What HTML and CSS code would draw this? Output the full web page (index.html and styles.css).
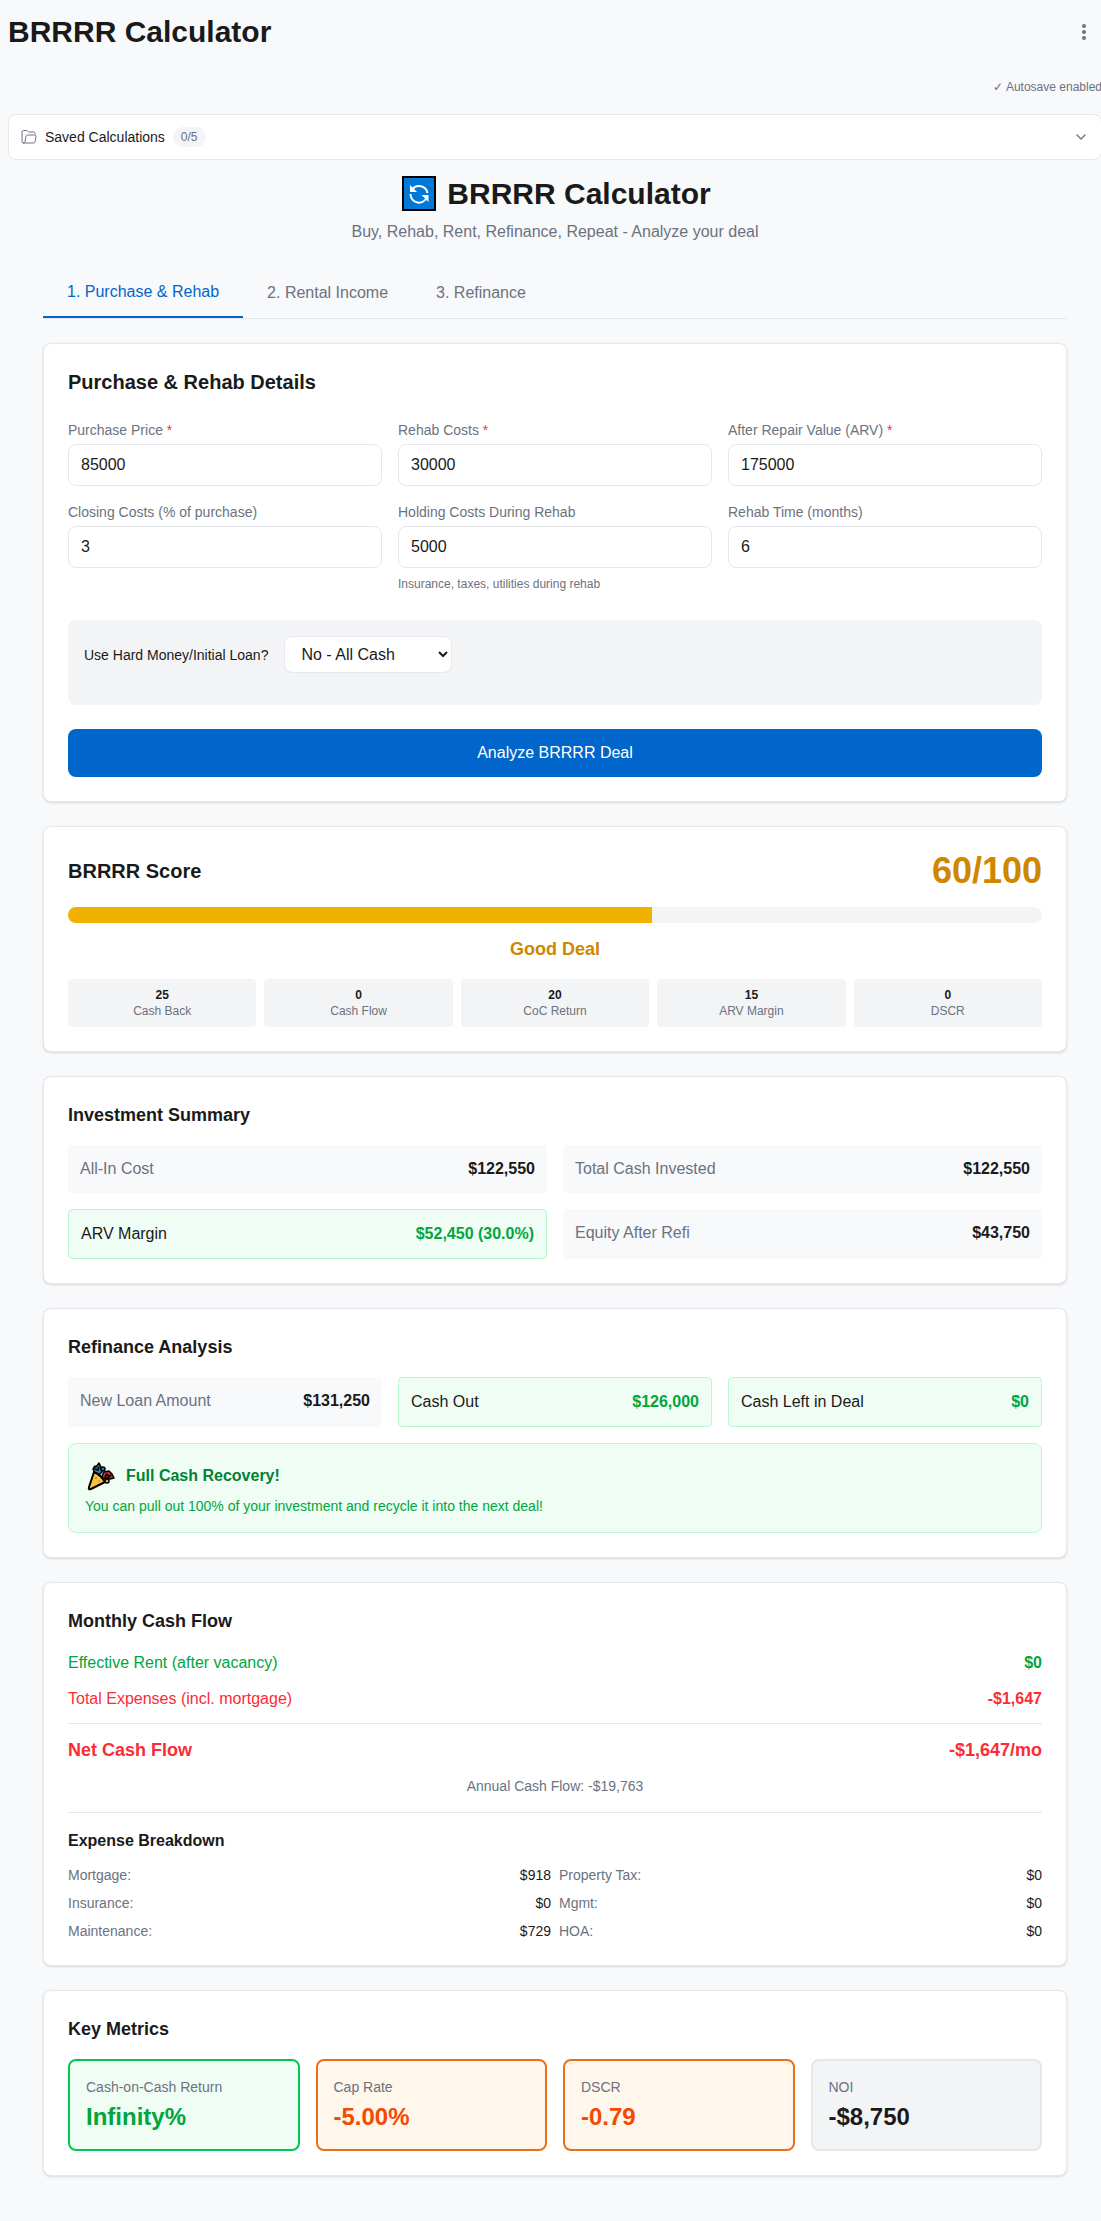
FILE: index.html
```html
<!DOCTYPE html>
<html lang="en">
<head>
  <meta charset="UTF-8">
  <meta name="viewport" content="width=device-width, initial-scale=1.0">
  <title>BRRRR Calculator</title>
  <link rel="stylesheet" href="styles.css">
</head>
<body>
  <div class="page">
    <header class="page-header">
      <h1>BRRRR Calculator</h1>
      <button class="menu-button" type="button" aria-label="More options">
        <svg width="20" height="20" viewBox="0 0 20 20" fill="currentColor">
          <circle cx="10" cy="4" r="2"/>
          <circle cx="10" cy="10" r="2"/>
          <circle cx="10" cy="16" r="2"/>
        </svg>
      </button>
    </header>

    <p class="autosave">✓ Autosave enabled</p>

    <!-- Saved calculations -->
    <button class="saved-toggle" type="button" aria-expanded="false">
      <svg width="16" height="16" viewBox="0 0 16 16" fill="none" stroke="currentColor" stroke-linecap="round" stroke-linejoin="round">
        <path d="M14 5V4.500a1.500 1.500 0 0 0-1.500-1.500H7.500L6 1.500H2.500A1.500 1.500 0 0 0 1 3v9.500A1.500 1.500 0 0 0 2.500 14"/>
        <path d="M2.500 14h10a1.500 1.500 0 0 0 1.500-1.200L15 7.500A1.500 1.500 0 0 0 13.500 6H6.500A1.500 1.500 0 0 0 5 7.200L4 12.500A1.500 1.500 0 0 1 2.500 14z"/>
      </svg>
      <span class="saved-title">Saved Calculations</span>
      <span class="badge">0/5</span>
      <svg class="chevron" width="16" height="16" viewBox="0 0 24 24" fill="none" stroke="currentColor" stroke-width="2" stroke-linecap="round" stroke-linejoin="round">
        <path d="M6 9l6 6 6-6"/>
      </svg>
    </button>

    <main class="calculator">
      <div class="intro">
        <h2 class="intro-title">
          <svg width="40" height="36" viewBox="0 0 40 36" aria-hidden="true">
            <rect x="4" y="1" width="32" height="33" fill="#0078d7" stroke="#000" stroke-width="2"/>
            <g fill="none" stroke="#fff" stroke-width="2">
              <path d="M13 14a8.500 8.500 0 0 1 15.500 3"/>
              <path d="M28 21a8.500 8.500 0 0 1-16.500-3"/>
            </g>
            <path d="M11 9v7h7z" fill="#fff"/>
            <path d="M29.500 26v-7h-7z" fill="#fff"/>
          </svg>
          BRRRR Calculator
        </h2>
        <p>Buy, Rehab, Rent, Refinance, Repeat - Analyze your deal</p>
      </div>

      <nav class="tabs">
        <button class="tab active" type="button">1. Purchase &amp; Rehab</button>
        <button class="tab" type="button">2. Rental Income</button>
        <button class="tab" type="button">3. Refinance</button>
      </nav>

      <!-- Purchase form -->
      <form class="card">
        <h3 class="form-title">Purchase &amp; Rehab Details</h3>
        <div class="grid three">
          <div class="field">
            <label for="purchase-price">Purchase Price <span class="required">*</span></label>
            <input type="text" inputmode="numeric" id="purchase-price" value="85000">
          </div>
          <div class="field">
            <label for="rehab-costs">Rehab Costs <span class="required">*</span></label>
            <input type="text" inputmode="numeric" id="rehab-costs" value="30000">
          </div>
          <div class="field">
            <label for="arv">After Repair Value (ARV) <span class="required">*</span></label>
            <input type="text" inputmode="numeric" id="arv" value="175000">
          </div>
          <div class="field">
            <label for="closing-costs">Closing Costs (% of purchase)</label>
            <input type="text" inputmode="numeric" id="closing-costs" value="3">
          </div>
          <div class="field">
            <label for="holding-costs">Holding Costs During Rehab</label>
            <input type="text" inputmode="numeric" id="holding-costs" value="5000">
            <small>Insurance, taxes, utilities during rehab</small>
          </div>
          <div class="field">
            <label for="rehab-time">Rehab Time (months)</label>
            <input type="text" inputmode="numeric" id="rehab-time" value="6">
          </div>
        </div>

        <div class="loan-box">
          <label for="initial-loan">Use Hard Money/Initial Loan?</label>
          <select id="initial-loan">
            <option>No - All Cash</option>
            <option>Yes - Use Loan</option>
          </select>
        </div>

        <button class="analyze-button" type="button">Analyze BRRRR Deal</button>
      </form>

      <!-- Score -->
      <section class="card">
        <div class="score-header">
          <h3>BRRRR Score</h3>
          <span class="score">60/100</span>
        </div>
        <div class="score-bar">
          <div class="score-fill" style="width: 60%"></div>
        </div>
        <p class="score-label">Good Deal</p>
        <div class="score-parts">
          <div class="score-part"><strong>25</strong><span>Cash Back</span></div>
          <div class="score-part"><strong>0</strong><span>Cash Flow</span></div>
          <div class="score-part"><strong>20</strong><span>CoC Return</span></div>
          <div class="score-part"><strong>15</strong><span>ARV Margin</span></div>
          <div class="score-part"><strong>0</strong><span>DSCR</span></div>
        </div>
      </section>

      <!-- Investment summary -->
      <section class="card">
        <h4>Investment Summary</h4>
        <div class="grid two">
          <div class="stat"><span>All-In Cost</span><strong>$122,550</strong></div>
          <div class="stat"><span>Total Cash Invested</span><strong>$122,550</strong></div>
          <div class="stat good"><span>ARV Margin</span><strong>$52,450 (30.0%)</strong></div>
          <div class="stat"><span>Equity After Refi</span><strong>$43,750</strong></div>
        </div>
      </section>

      <!-- Refinance analysis -->
      <section class="card">
        <h4>Refinance Analysis</h4>
        <div class="grid three">
          <div class="stat"><span>New Loan Amount</span><strong>$131,250</strong></div>
          <div class="stat good"><span>Cash Out</span><strong>$126,000</strong></div>
          <div class="stat good"><span>Cash Left in Deal</span><strong>$0</strong></div>
        </div>
        <div class="recovery">
          <div class="recovery-title">
            <svg width="33" height="32" viewBox="0 0 33 32" stroke="#000" stroke-width="1.500" stroke-linejoin="round" stroke-linecap="round" aria-hidden="true">
              <path d="M8 9l2-3 1 1 3-4 2 4 1 5-3 3-4-1z" fill="#2b7fa8"/>
              <path d="M10 9l3 1 1-3" fill="none"/>
              <circle cx="18" cy="9" r="2" fill="#2b7fa8"/>
              <path d="M17 16l2-4 5-1 3 3 2 4-4 1-3-1-4 1z" fill="#b5303c"/>
              <path d="M20 17l2-3 2 3 2-2" fill="none"/>
              <circle cx="22" cy="21" r="2" fill="#f7b32b"/>
              <path d="M9 12q7 3 11 10L6 29q-3 1-2-2z" fill="#fcc23c" stroke-width="2"/>
              <path d="M11 18h.01" stroke="#d13438"/>
              <path d="M14 21h.01" stroke="#2b9fd8"/>
            </svg>
            <strong>Full Cash Recovery!</strong>
          </div>
          <p>You can pull out 100% of your investment and recycle it into the next deal!</p>
        </div>
      </section>

      <!-- Monthly cash flow -->
      <section class="card">
        <h4>Monthly Cash Flow</h4>
        <div class="flow">
          <div class="flow-row income"><span>Effective Rent (after vacancy)</span><strong>$0</strong></div>
          <div class="flow-row expense"><span>Total Expenses (incl. mortgage)</span><strong>-$1,647</strong></div>
          <div class="flow-row net"><span>Net Cash Flow</span><span>-$1,647/mo</span></div>
          <p class="annual">Annual Cash Flow: -$19,763</p>
        </div>
        <div class="breakdown">
          <h5>Expense Breakdown</h5>
          <div class="breakdown-list">
            <div><span>Mortgage:</span><b>$918</b></div>
            <div><span>Property Tax:</span><b>$0</b></div>
            <div><span>Insurance:</span><b>$0</b></div>
            <div><span>Mgmt:</span><b>$0</b></div>
            <div><span>Maintenance:</span><b>$729</b></div>
            <div><span>HOA:</span><b>$0</b></div>
          </div>
        </div>
      </section>

      <!-- Key metrics -->
      <section class="card">
        <h4>Key Metrics</h4>
        <div class="grid four">
          <div class="metric good"><span>Cash-on-Cash Return</span><strong>Infinity%</strong></div>
          <div class="metric warning"><span>Cap Rate</span><strong>-5.00%</strong></div>
          <div class="metric warning"><span>DSCR</span><strong>-0.79</strong></div>
          <div class="metric"><span>NOI</span><strong>-$8,750</strong></div>
        </div>
      </section>
    </main>
  </div>
</body>
</html>
```

FILE: styles.css
```css
/* Global Styles */
* {
  box-sizing: border-box;
}

body {
  background-color: #f8f9fb;
  color: #1a1a1a;
  font-family: "Liberation Sans", Arial, sans-serif;
  font-size: 16px;
  line-height: 24px;
  margin: 0;
  overflow-x: hidden;
}

h1, h2, h3, h4, h5, p {
  margin: 0;
}

button, input, select {
  color: inherit;
  font: inherit;
}

button {
  cursor: pointer;
}

.page {
  margin: 0 -1px 0 8px;
  padding-bottom: 20px;
}

/* Page Header */
.page-header {
  align-items: center;
  display: flex;
  justify-content: space-between;
  padding: 12px 0;
}

.page-header h1 {
  font-size: 30px;
  line-height: 40px;
}

.menu-button {
  background: none;
  border: none;
  border-radius: 8px;
  color: #6b7280;
  display: flex;
  padding: 8px;
}

.autosave {
  color: #6b7280;
  font-size: 12px;
  line-height: 16px;
  padding: 15px 0 19px;
  text-align: right;
}

/* Saved Calculations */
.saved-toggle {
  align-items: center;
  background-color: #fff;
  border: 1px solid #e5e7eb;
  border-radius: 8px;
  color: #6b7280;
  display: flex;
  gap: 8px;
  padding: 12px;
  width: 100%;
}

.saved-title {
  color: #1a1a1a;
  font-size: 14px;
  line-height: 20px;
}

.badge {
  background-color: #f3f4f6;
  border-radius: 10px;
  font-size: 12px;
  line-height: 16px;
  padding: 2px 8px;
}

.chevron {
  margin-left: auto;
}

/* Calculator */
.calculator {
  margin: 0 auto;
  max-width: 1024px;
  padding-top: 16px;
}

.intro {
  margin-bottom: 24px;
  text-align: center;
}

.intro-title {
  align-items: center;
  display: flex;
  font-size: 30px;
  gap: 8px;
  justify-content: center;
  line-height: 36px;
  margin-bottom: 8px;
}

.intro p {
  color: #6b7280;
}

.tabs {
  border-bottom: 1px solid #e5e7eb;
  display: flex;
  margin-bottom: 24px;
}

.tab {
  background: none;
  border: none;
  color: #6b7280;
  padding: 12px 24px;
}

.tab.active {
  border-bottom: 2px solid #0066cc;
  color: #0066cc;
}

/* Cards */
.card {
  background-color: #fff;
  border: 1px solid #e5e7eb;
  border-radius: 8px;
  box-shadow: 0 1px 3px rgba(0, 0, 0, 0.1), 0 1px 2px -1px rgba(0, 0, 0, 0.1);
  margin-bottom: 24px;
  padding: 24px;
}

.card h3 {
  font-size: 20px;
  line-height: 28px;
}

.card h4 {
  font-size: 18px;
  line-height: 28px;
  margin-bottom: 16px;
}

.grid {
  display: grid;
  gap: 16px;
}

.grid.two {
  grid-template-columns: repeat(2, 1fr);
}

.grid.three {
  grid-template-columns: repeat(3, 1fr);
}

.grid.four {
  grid-template-columns: repeat(4, 1fr);
}

/* Form */
.card .form-title {
  margin-bottom: 24px;
}

.field label {
  color: #6b7280;
  display: block;
  font-size: 14px;
  line-height: 20px;
  margin-bottom: 4px;
}

.required {
  color: #fb2c36;
}

.field input {
  background-color: #fff;
  border: 1px solid #e5e7eb;
  border-radius: 8px;
  display: block;
  height: 42px;
  padding: 8px 12px;
  width: 100%;
}

.field small {
  color: #6b7280;
  display: block;
  font-size: 12px;
  margin-top: 4px;
}

.loan-box {
  align-items: center;
  background-color: #f3f4f6;
  border-radius: 8px;
  display: flex;
  gap: 16px;
  margin: 24px 0;
  padding: 16px 16px 32px;
}

.loan-box label {
  font-size: 14px;
  line-height: 20px;
}

.loan-box select {
  background-color: #fff;
  border: 1px solid #e5e7eb;
  border-radius: 8px;
  height: 37px;
  padding: 8px 12px;
  padding-right: 0;
  width: 168px;
}

.analyze-button {
  background-color: #0066cc;
  border: none;
  border-radius: 8px;
  color: #fff;
  display: block;
  padding: 12px 24px;
  width: 100%;
}

/* Score */
.score-header {
  align-items: center;
  display: flex;
  justify-content: space-between;
  margin-bottom: 16px;
}

.score {
  color: #d08700;
  font-size: 36px;
  font-weight: bold;
  line-height: 40px;
}

.score-bar {
  background-color: #f3f4f6;
  border-radius: 8px;
  height: 16px;
  margin-bottom: 12px;
  overflow: hidden;
}

.score-fill {
  background-color: #f0b100;
  height: 100%;
}

.score-label {
  color: #d08700;
  font-size: 18px;
  font-weight: bold;
  line-height: 28px;
  margin-bottom: 16px;
  text-align: center;
}

.score-parts {
  display: grid;
  gap: 8px;
  grid-template-columns: repeat(5, 1fr);
}

.score-part {
  background-color: #f3f4f6;
  border-radius: 4px;
  display: flex;
  flex-direction: column;
  font-size: 12px;
  line-height: 16px;
  padding: 8px;
  text-align: center;
}

.score-part span {
  color: #6b7280;
}

/* Stats */
.stat {
  background-color: #f8f9fb;
  border-radius: 4px;
  display: flex;
  justify-content: space-between;
  padding: 12px;
}

.stat span {
  color: #6b7280;
}

.stat.good {
  background-color: #f0fdf4;
  border: 1px solid #b9f8cf;
}

.stat.good span {
  color: #1a1a1a;
}

.stat.good strong {
  color: #00a63e;
}

.recovery {
  background-color: #f0fdf4;
  border: 1px solid #b9f8cf;
  border-radius: 8px;
  margin-top: 16px;
  padding: 16px;
}

.recovery-title {
  align-items: center;
  color: #008236;
  display: flex;
  gap: 8px;
  margin-bottom: 4px;
}

.recovery p {
  color: #00a63e;
  font-size: 14px;
  line-height: 20px;
}

/* Cash Flow */
.flow {
  display: flex;
  flex-direction: column;
  gap: 12px;
}

.flow-row {
  display: flex;
  justify-content: space-between;
}

.income {
  color: #00a63e;
}

.expense {
  color: #fb2c36;
}

.net {
  border-top: 1px solid #e5e7eb;
  color: #fb2c36;
  font-size: 18px;
  font-weight: bold;
  line-height: 28px;
  padding-top: 12px;
}

.annual {
  color: #6b7280;
  font-size: 14px;
  line-height: 20px;
  text-align: center;
}

.breakdown {
  border-top: 1px solid #e5e7eb;
  margin-top: 16px;
  padding-top: 16px;
}

.breakdown h5 {
  font-size: 16px;
  margin-bottom: 12px;
}

.breakdown-list {
  display: grid;
  font-size: 14px;
  gap: 8px;
  grid-template-columns: repeat(2, 1fr);
  line-height: 20px;
}

.breakdown-list div {
  display: flex;
  justify-content: space-between;
}

.breakdown-list span {
  color: #6b7280;
}

.breakdown-list b {
  font-weight: normal;
}

/* Metrics */
.metric {
  background-color: #f3f4f6;
  border: 2px solid #e5e7eb;
  border-radius: 8px;
  display: flex;
  flex-direction: column;
  gap: 4px;
  padding: 16px;
}

.metric span {
  color: #6b7280;
  font-size: 14px;
  line-height: 20px;
}

.metric strong {
  font-size: 24px;
  line-height: 32px;
}

.metric.good {
  background-color: #f0fdf4;
  border-color: #00c950;
}

.metric.good strong {
  color: #00a63e;
}

.metric.warning {
  background-color: #fff6ec;
  border-color: #e8701c;
}

.metric.warning strong {
  color: #f54900;
}
```
